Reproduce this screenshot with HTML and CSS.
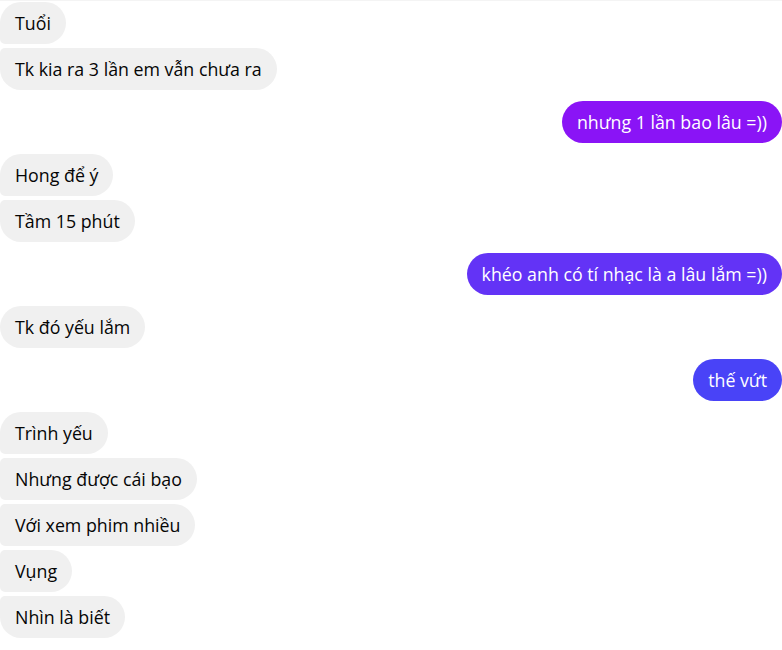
FILE: index.html
```html
<!DOCTYPE html>
<html lang="vi">
<head>
<meta charset="utf-8">
<title>Chat</title>
<link rel="stylesheet" href="styles.css">
</head>
<body>
<div class="chat">
  <div class="group in">
    <div class="msg">Tuổi</div>
    <div class="msg">Tk kia ra 3 lần em vẫn chưa ra</div>
  </div>
  <div class="group out">
    <div class="msg c1">nhưng 1 lần bao lâu =))</div>
  </div>
  <div class="group in">
    <div class="msg">Hong để ý</div>
    <div class="msg">Tầm 15 phút</div>
  </div>
  <div class="group out">
    <div class="msg c2">khéo anh có tí nhạc là a lâu lắm =))</div>
  </div>
  <div class="group in">
    <div class="msg">Tk đó yếu lắm</div>
  </div>
  <div class="group out">
    <div class="msg c3">thế vứt</div>
  </div>
  <div class="group in">
    <div class="msg">Trình yếu</div>
    <div class="msg">Nhưng được cái bạo</div>
    <div class="msg">Với xem phim nhiều</div>
    <div class="msg">Vụng</div>
    <div class="msg">Nhìn là biết</div>
  </div>
</div>
</body>
</html>
```
FILE: styles.css
```css
html, body {
  margin: 0;
  padding: 0;
  background: #ffffff;
}
body {
  font-family: "Open Sans", "Noto Sans", sans-serif;
  font-size: 17.8px;
  color: #050505;
  border-top: 1px solid #f4f4f4;
}
.chat {
  display: flex;
  flex-direction: column;
  gap: 11px;
  padding-top: 1px;
}
.group {
  display: flex;
  flex-direction: column;
  gap: 4px;
}
.group.in { align-items: flex-start; }
.group.out { align-items: flex-end; }
.msg {
  height: 42px;
  box-sizing: border-box;
  padding: 0 15px;
  display: flex;
  align-items: center;
  border-radius: 21px;
  white-space: nowrap;
}
.in .msg {
  background: #f0f0f0;
  border-radius: 5px 21px 21px 5px;
}
.in .msg:first-child { border-top-left-radius: 21px; }
.in .msg:last-child { border-bottom-left-radius: 21px; }
.in .msg:only-child { border-radius: 21px; }
.out .msg {
  color: #ffffff;
}
.c1 { background: #8a14f6; }
.c2 { background: #6333f6; }
.c3 { background: #4943f7; }
```
